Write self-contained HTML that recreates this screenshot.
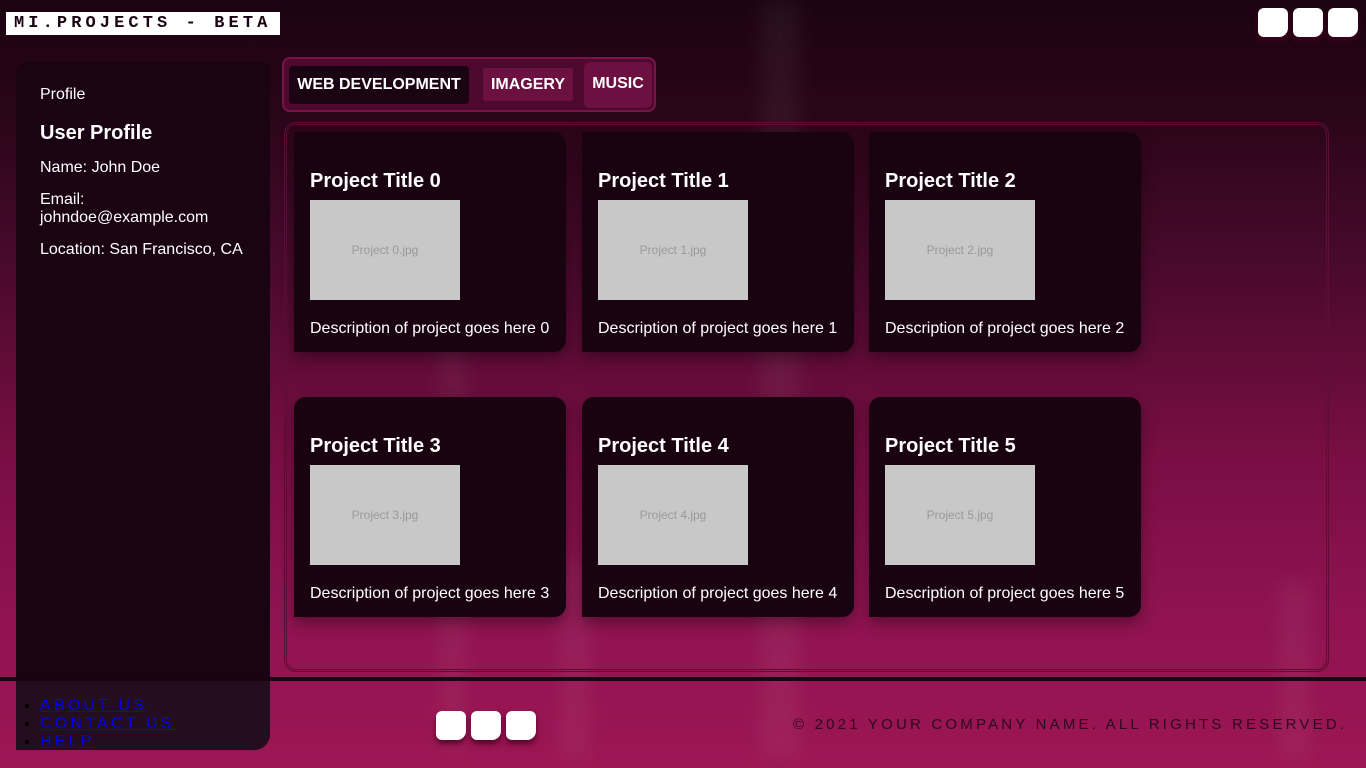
<!DOCTYPE html>
<html><head><meta charset="utf-8"><style>
*{box-sizing:border-box}
body{margin:0;width:1366px;height:768px;overflow:hidden;font-family:"Liberation Sans",Arial,sans-serif;position:relative;
background:linear-gradient(180deg,#1c0312 0%,#2a0519 15%,#4a0a2c 35%,#7a0e44 60%,#8f1350 80%,#9c1654 100%);}
.streak{position:absolute;background:rgba(255,255,255,0.05);filter:blur(10px)}
.logo{position:absolute;left:6px;top:12px;width:274px;height:23px;background:#fff;font-family:"Liberation Mono",monospace;font-weight:bold;font-size:17px;letter-spacing:4.1px;color:#1a0312;padding-left:8px;line-height:23px}
.sq{position:absolute;width:30px;height:29px;background:#fff;border-radius:6px 6px 9px 6px;box-shadow:0 4px 6px rgba(70,0,30,.8)}
.side{position:absolute;left:16px;top:62px;width:254px;height:688px;background:#1a0312;border-radius:10px 0 16px 0;color:#fff;padding:24px 24px}
.side .img{font-size:16px;margin-top:0}
.side h2{font-size:20px;margin:18px 0 14px}
.side p{font-size:16px;margin:0 0 14px;line-height:18px}
.tabs{position:absolute;left:282px;top:57px;width:374px;height:55px;border:2px solid #7a1448;border-radius:8px;background:#4d0a2e}
.tab{position:absolute;color:#fff;font-weight:bold;font-size:16px;text-align:center}
.main{position:absolute;left:284px;top:122px;width:1045px;height:550px;border:3px double #5e0d38;border-radius:12px}
.card{position:absolute;width:272px;height:220px;background:#1a0311;border-radius:0 12px 12px 0;box-shadow:0 6px 14px rgba(0,0,0,.35);color:#fff;padding:0 16px}
.card.r2{border-radius:12px 12px 12px 0}
.card h3{font-size:20px;margin:38px 0 8px;line-height:22px}
.card .ph{width:150px;height:100px;background:#c8c8c8;color:#999;font-size:12px;text-align:center;line-height:100px}
.card p{font-size:16px;margin:20px 0 0}
.footline{position:absolute;left:0;top:677px;width:1366px;height:4px;background:#1a0311}
.footov{position:absolute;left:16px;top:681px;width:254px;height:69px;background:#230d1f;border-radius:0 0 16px 0}
ul{position:absolute;left:0;top:697px;margin:0;padding-left:40px;color:#000;font-size:16px;line-height:18px;letter-spacing:3.2px}
ul a{color:#0000ee}
.copy{position:absolute;left:793px;top:716px;font-size:15px;letter-spacing:3.2px;color:#2a0a1c;white-space:nowrap}
</style></head><body>
<div class="streak" style="left:760px;width:40px;top:0;height:760px"></div>
<div class="streak" style="left:440px;width:25px;top:330px;height:420px"></div>
<div class="streak" style="left:1280px;width:30px;top:580px;height:180px"></div>
<div class="streak" style="left:560px;width:30px;top:560px;height:200px"></div>
<div class="logo">MI.PROJECTS - BETA</div>
<div class="sq" style="left:1258px;top:8px"></div>
<div class="sq" style="left:1293px;top:8px"></div>
<div class="sq" style="left:1328px;top:8px"></div>
<div class="side">
<div class="img">Profile</div>
<h2>User Profile</h2>
<p>Name: John Doe</p>
<p>Email:<br>johndoe@example.com</p>
<p>Location: San Francisco, CA</p>
</div>
<div class="tabs"></div>
<div class="tab" style="left:289px;top:66px;width:180px;height:38px;line-height:38px;background:#1a0312;border-radius:4px">WEB DEVELOPMENT</div>
<div class="tab" style="left:483px;top:68px;width:90px;height:33px;line-height:33px;background:#6b1040;border-radius:3px">IMAGERY</div>
<div class="tab" style="left:584px;top:62px;width:68px;height:46px;line-height:44px;background:#6b1040;border-radius:6px">MUSIC</div>
<div class="main"></div>
<div class="card" style="left:294px;top:132px"><h3>Project Title 0</h3><div class="ph">Project 0.jpg</div><p>Description of project goes here 0</p></div>
<div class="card" style="left:582px;top:132px"><h3>Project Title 1</h3><div class="ph">Project 1.jpg</div><p>Description of project goes here 1</p></div>
<div class="card" style="left:869px;top:132px"><h3>Project Title 2</h3><div class="ph">Project 2.jpg</div><p>Description of project goes here 2</p></div>
<div class="card r2" style="left:294px;top:397px"><h3>Project Title 3</h3><div class="ph">Project 3.jpg</div><p>Description of project goes here 3</p></div>
<div class="card r2" style="left:582px;top:397px"><h3>Project Title 4</h3><div class="ph">Project 4.jpg</div><p>Description of project goes here 4</p></div>
<div class="card r2" style="left:869px;top:397px"><h3>Project Title 5</h3><div class="ph">Project 5.jpg</div><p>Description of project goes here 5</p></div>
<div class="footline"></div>
<div class="footov"></div>
<ul><li><a href="#">ABOUT US</a></li><li><a href="#">CONTACT US</a></li><li><a href="#">HELP</a></li></ul>
<div class="sq" style="left:436px;top:711px"></div>
<div class="sq" style="left:471px;top:711px"></div>
<div class="sq" style="left:506px;top:711px"></div>
<div class="copy">© 2021 YOUR COMPANY NAME. ALL RIGHTS RESERVED.</div>
</body></html>
